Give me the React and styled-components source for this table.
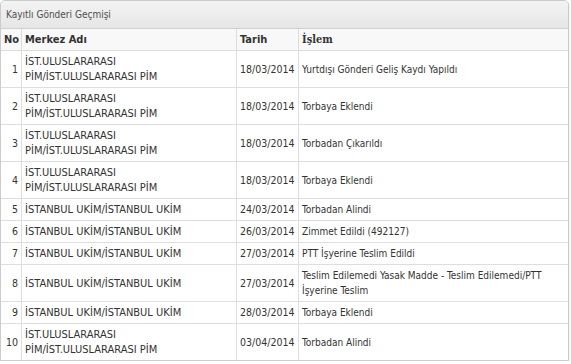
import React from "react";
import styled, { createGlobalStyle } from "styled-components";

const Global = createGlobalStyle`
  * { box-sizing: border-box; }
  body { margin: 0; background: #fff; font-family: "DejaVu Sans Condensed", "DejaVu Sans", sans-serif; }
`;

const Panel = styled.div`
  width: 569px;
  border: 1px solid #cbcbcb;
  border-radius: 5px 5px 0 0;
  box-shadow: 0 1px 2px rgba(0, 0, 0, 0.18);
  overflow: hidden;
  background: #fff;
`;

const TitleBar = styled.div`
  height: 28px;
  padding: 0 5px;
  display: flex;
  align-items: center;
  background: linear-gradient(#f3f3f3, #e6e6e6);
  border-bottom: 1px solid #cfcfcf;
  color: #4f4f4f;
  font-size: 10px;
`;

const Table = styled.table`
  width: 100%;
  border-collapse: separate;
  border-spacing: 0;
  table-layout: fixed;
  color: #333;
`;

const Th = styled.th`
  width: ${(p) => (p.$w ? p.$w + "px" : "auto")};
  height: 22px;
  padding: 2px 3px;
  text-align: left;
  font-weight: bold;
  font-size: 11px;
  font-family: ${(p) => (p.$serif ? '"DejaVu Serif Condensed", "DejaVu Serif", serif' : "inherit")};
  background: #f8f8f8;
  color: #333;
  border-bottom: 1px solid #dcdcdc;
  border-right: 1px solid #dcdcdc;
  &:last-child { border-right: none; }
`;

const Td = styled.td`
  padding: 3px;
  font-size: ${(p) => p.$size || 10}px;
  line-height: 15px;
  vertical-align: middle;
  text-align: ${(p) => (p.$right ? "right" : "left")};
  border-bottom: 1px solid #dedede;
  border-right: 1px solid #dedede;
  &:last-child { border-right: none; }
  tr:last-child > & { border-bottom: none; }
`;

const IST = "İST.ULUSLARARASI\nPİM/İST.ULUSLARARASI PİM";
const UKIM = "İSTANBUL UKİM/İSTANBUL UKİM";

const rows = [
  [1, IST, "18/03/2014", "Yurtdışı Gönderi Geliş Kaydı Yapıldı"],
  [2, IST, "18/03/2014", "Torbaya Eklendi"],
  [3, IST, "18/03/2014", "Torbadan Çıkarıldı"],
  [4, IST, "18/03/2014", "Torbaya Eklendi"],
  [5, UKIM, "24/03/2014", "Torbadan Alindi"],
  [6, UKIM, "26/03/2014", "Zimmet Edildi (492127)"],
  [7, UKIM, "27/03/2014", "PTT İşyerine Teslim Edildi"],
  [8, UKIM, "27/03/2014", "Teslim Edilemedi Yasak Madde - Teslim Edilemedi/PTT İşyerine Teslim"],
  [9, UKIM, "28/03/2014", "Torbaya Eklendi"],
  [10, IST, "03/04/2014", "Torbadan Alindi"],
];

const Lines = ({ text }) =>
  text.split("\n").map((t, i, a) => (
    <React.Fragment key={i}>
      {t}
      {i < a.length - 1 && <br />}
    </React.Fragment>
  ));

export default function App() {
  return (
    <>
      <Global />
      <Panel>
        <TitleBar>Kayıtlı Gönderi Geçmişi</TitleBar>
        <Table>
          <thead>
            <tr>
              <Th $w={21}>No</Th>
              <Th $w={215}>Merkez Adı</Th>
              <Th $w={62}>Tarih</Th>
              <Th $serif>İşlem</Th>
            </tr>
          </thead>
          <tbody>
            {rows.map(([n, m, d, s]) => (
              <tr key={n}>
                <Td $right $size={10.5}>{n}</Td>
                <Td $size={11}><Lines text={m} /></Td>
                <Td $size={10.5}>{d}</Td>
                <Td $size={10}>{s}</Td>
              </tr>
            ))}
          </tbody>
        </Table>
      </Panel>
    </>
  );
}
